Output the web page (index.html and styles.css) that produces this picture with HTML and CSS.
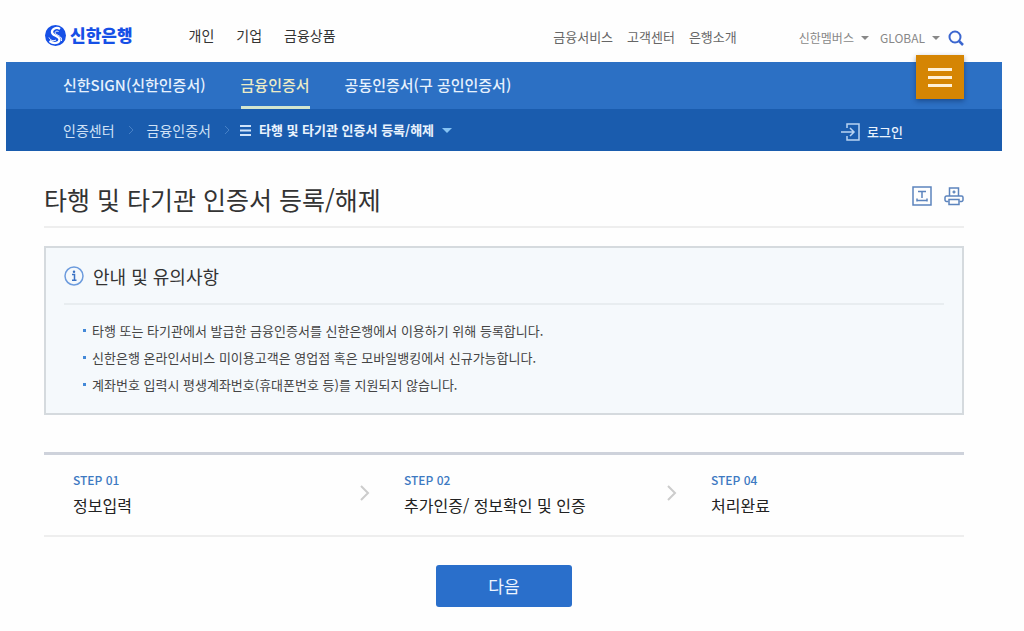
FILE: index.html
```html
<!DOCTYPE html>
<html lang="ko">
<head>
<meta charset="utf-8">
<meta name="viewport" content="width=device-width, initial-scale=1">
<title>타행 및 타기관 인증서 등록/해제</title>
<link rel="stylesheet" href="styles.css">
</head>
<body>
<header class="top">
  <a class="logo" href="#">
    <svg width="21" height="21" viewBox="0 0 42 42" aria-hidden="true">
      <circle cx="21" cy="21" r="21" fill="#1650e6"/>
      <path d="M30 8C23 3 13 8 14 15C15 22 29 21 29 29C29 36 18 39 9 32" fill="none" stroke="#fff" stroke-width="4.5"/>
      <path d="M27 13C22 11 19 14 21 17C24 21 35 22 33 32" fill="none" stroke="#fff" stroke-width="2"/>
      <path d="M8 25C11 31 17 33 22 30" fill="none" stroke="#fff" stroke-width="2"/>
    </svg>
    <span>신한은행</span>
  </a>
  <nav class="main-nav">
    <a href="#">개인</a>
    <a href="#">기업</a>
    <a href="#">금융상품</a>
  </nav>
  <nav class="service-nav">
    <a href="#">금융서비스</a>
    <a href="#">고객센터</a>
    <a href="#">은행소개</a>
  </nav>
  <div class="tools">
    <button class="drop" type="button">신한멤버스<span class="caret"></span></button>
    <button class="drop" type="button">GLOBAL<span class="caret"></span></button>
    <button class="search" type="button" aria-label="검색">
      <svg width="16" height="16" viewBox="0 0 16 16" fill="none" stroke="#3b66cf" stroke-width="2"><circle cx="7" cy="7" r="5.5"/><path d="M11 11l4 4" stroke-width="2.5"/></svg>
    </button>
  </div>
</header>

<div class="band">
  <button class="menu" type="button" aria-label="전체메뉴"><span></span><span></span><span></span></button>
  <nav class="tabs">
    <a href="#">신한SIGN(신한인증서)</a>
    <a class="active" href="#">금융인증서</a>
    <a href="#">공동인증서(구 공인인증서)</a>
  </nav>
  <div class="path">
    <a href="#">인증센터</a>
    <svg class="sep" width="6" height="10" viewBox="0 0 6 10"><path d="M1 1l4 4-4 4"/></svg>
    <a href="#">금융인증서</a>
    <svg class="sep" width="6" height="10" viewBox="0 0 6 10"><path d="M1 1l4 4-4 4"/></svg>
    <button class="current" type="button">
      <svg width="11" height="11" viewBox="0 0 11 11" stroke="#cfe3fa" stroke-width="2"><path d="M0 1h11M0 5.500h11M0 10h11"/></svg>
      타행 및 타기관 인증서 등록/해제
      <span class="caret"></span>
    </button>
    <a class="login" href="#">
      <svg width="19" height="18" viewBox="0 0 19 18" fill="none" stroke="#b9d3f2" stroke-width="1.500"><path d="M6 5V1h12v16H6v-4M0 9h13M9 5l4 4-4 4"/></svg>
      로그인
    </a>
  </div>
</div>

<main class="content">
  <div class="title-row">
    <h1>타행 및 타기관 인증서 등록/해제</h1>
    <div class="actions">
      <button type="button" aria-label="글자크기">
        <svg width="20" height="20" viewBox="0 0 20 20" fill="none" stroke="#5c84bd" stroke-width="1.500"><path d="M1 1h18v18H1z"/><path d="M6 5.500h8M10 5.500v6.500"/><path d="M5 14.500h10M5 12.500v3M15 12.500v3"/></svg>
      </button>
      <button type="button" aria-label="인쇄">
        <svg width="20" height="20" viewBox="0 0 20 20" fill="none" stroke="#5c84bd" stroke-width="1.500"><path d="M5.500 10V2h9v8"/><path d="M8.500 6h3M10 4.500v3"/><path d="M4.500 15.500H2.500a1.500 1.500 0 0 1-1.500-1.500v-2.500a1.500 1.500 0 0 1 1.500-1.500h15a1.500 1.500 0 0 1 1.500 1.500V14a1.500 1.500 0 0 1-1.500 1.500h-2"/><path d="M5 13.500h10V18.500H5z"/></svg>
      </button>
    </div>
  </div>

  <section class="notice">
    <h2>
      <svg width="20" height="20" viewBox="0 0 20 20"><circle cx="10" cy="10" r="9" fill="none" stroke="#6c9bdd" stroke-width="1.500"/><path d="M8 8.500h2.500V14M8 14.250h4.500" fill="none" stroke="#3a72c4" stroke-width="1.500"/><circle cx="10" cy="5.750" r="1.250" fill="#3a72c4"/></svg>
      안내 및 유의사항
    </h2>
    <ul>
      <li>타행 또는 타기관에서 발급한 금융인증서를 신한은행에서 이용하기 위해 등록합니다.</li>
      <li>신한은행 온라인서비스 미이용고객은 영업점 혹은 모바일뱅킹에서 신규가능합니다.</li>
      <li>계좌번호 입력시 평생계좌번호(휴대폰번호 등)를 지원되지 않습니다.</li>
    </ul>
  </section>

  <ol class="steps">
    <li><div><span>STEP 01</span><strong>정보입력</strong></div><svg width="10" height="16" viewBox="0 0 10 16"><path d="M1 1l7 7-7 7"/></svg></li>
    <li><div><span>STEP 02</span><strong>추가인증/ 정보확인 및 인증</strong></div><svg width="10" height="16" viewBox="0 0 10 16"><path d="M1 1l7 7-7 7"/></svg></li>
    <li><div><span>STEP 04</span><strong>처리완료</strong></div></li>
  </ol>

  <button class="next" type="button">다음</button>
</main>
</body>
</html>
```

FILE: styles.css
```css
* {
  box-sizing: border-box;
}

body {
  margin: 0;
  padding: 0 22px 0 6px;
  background: #fefefe;
  color: #333;
  font-family: "Noto Sans CJK KR", sans-serif;
  font-size: 13px;
  line-height: 20px;
}

a {
  color: inherit;
  text-decoration: none;
}

button {
  padding: 0;
  border: 0;
  background: none;
  color: inherit;
  font: inherit;
  cursor: pointer;
}

svg {
  display: block;
  flex: none;
}

.top {
  display: flex;
  align-items: center;
  height: 62px;
  padding: 12px 38px 0 39px;
  white-space: nowrap;
}

.logo {
  display: flex;
  align-items: center;
  gap: 4px;
  padding-bottom: 4px;
  color: #1650e6;
  font-size: 17px;
  font-weight: 900;
}

.main-nav {
  display: flex;
  gap: 22px;
  margin-left: 56px;
  padding-bottom: 4px;
  font-size: 14px;
}

.service-nav {
  display: flex;
  gap: 14px;
  margin-left: auto;
  color: #666;
}

.tools {
  display: flex;
  align-items: center;
  margin-left: 62px;
  padding-top: 2px;
  color: #888;
  font-size: 12px;
}

.drop {
  display: flex;
  align-items: center;
  gap: 7px;
  margin-right: 11px;
}

.drop + .search {
  margin-left: -3px;
}

.caret {
  border: 4px solid transparent;
  border-top-color: currentColor;
  border-bottom: 0;
}

.band {
  position: relative;
  background: #1a5cae;
  color: #e6f1fd;
  white-space: nowrap;
}

.menu {
  position: absolute;
  top: -7px;
  right: 38px;
  display: flex;
  flex-direction: column;
  align-items: center;
  justify-content: center;
  gap: 5px;
  width: 48px;
  height: 44px;
  background: #d58503;
  box-shadow: 0 2px 5px rgba(0, 20, 60, 0.4);
}

.menu span {
  width: 24px;
  height: 3px;
  background: #fff0d6;
}

.tabs {
  display: flex;
  gap: 35px;
  padding: 0 57px;
  background: #2c70c4;
  font-size: 15px;
  font-weight: 500;
}

.tabs a {
  padding: 13px 0 11px;
  border-bottom: 3px solid transparent;
}

.tabs .active {
  border-color: #d3e6cf;
  color: #ebebc6;
}

.path {
  display: flex;
  align-items: center;
  height: 42px;
  padding: 0 99px 0 57px;
  color: #cfe1f6;
  font-size: 14px;
}

.sep {
  margin: 0 13px;
  fill: none;
  stroke: #4680c6;
}

.current {
  display: flex;
  align-items: center;
  gap: 8px;
  margin-left: -3px;
  color: #eaf3fd;
  font-size: 13px;
  font-weight: 700;
}

.current .caret {
  border-width: 5px;
  border-bottom-width: 0;
  border-top-color: #86c3f4;
}

.login {
  display: flex;
  align-items: center;
  gap: 7px;
  margin-left: auto;
  padding-top: 3px;
  color: #eaf3fd;
  font-size: 13px;
  font-weight: 500;
}

.content {
  padding: 26px 38px 24px;
}

.title-row {
  display: flex;
  justify-content: space-between;
  padding-bottom: 5px;
  border-bottom: 2px solid #eee;
}

h1 {
  margin: 0;
  color: #333;
  font-size: 25px;
  font-weight: 400;
  line-height: 44px;
}

.actions {
  display: flex;
  gap: 12px;
  height: 20px;
  margin-top: 9px;
}

.notice {
  margin-top: 18px;
  padding: 16px 18px 15px;
  border: 2px solid #d5dade;
  background: #f5f9fc;
}

.notice h2 {
  display: flex;
  align-items: center;
  gap: 9px;
  margin: 0;
  padding-bottom: 15px;
  border-bottom: 2px solid #e8edf0;
  font-size: 18px;
  font-weight: 400;
  line-height: 24px;
}

.notice ul {
  margin: 12px 0 0;
  padding: 0 0 0 19px;
  list-style: none;
  color: #444;
}

.notice li {
  display: flex;
  align-items: center;
  gap: 6px;
  line-height: 27px;
}

.notice li::before {
  content: "";
  width: 3px;
  height: 3px;
  background: #4389d8;
}

.steps {
  display: grid;
  grid-template-columns: 331fr 307fr 282fr;
  margin: 37px 0 0;
  padding: 0;
  border-top: 3px solid #ced2db;
  border-bottom: 2px solid #eee;
  list-style: none;
}

.steps li {
  display: flex;
  align-items: center;
  justify-content: space-between;
  padding: 13px 5px 17px 29px;
}

.steps span,
.steps strong {
  display: block;
}

.steps span {
  color: #3d79c2;
  font-size: 12px;
  font-weight: 500;
  line-height: 24px;
}

.steps strong {
  color: #222;
  font-size: 16px;
  font-weight: 400;
  line-height: 26px;
}

.steps svg {
  fill: none;
  stroke: #ccc;
  stroke-width: 2;
}

.next {
  display: block;
  width: 136px;
  margin: 28px auto 0;
  border-radius: 3px;
  background: #2a6fcb;
  color: #eef5ff;
  font-size: 17px;
  line-height: 42px;
}
```
